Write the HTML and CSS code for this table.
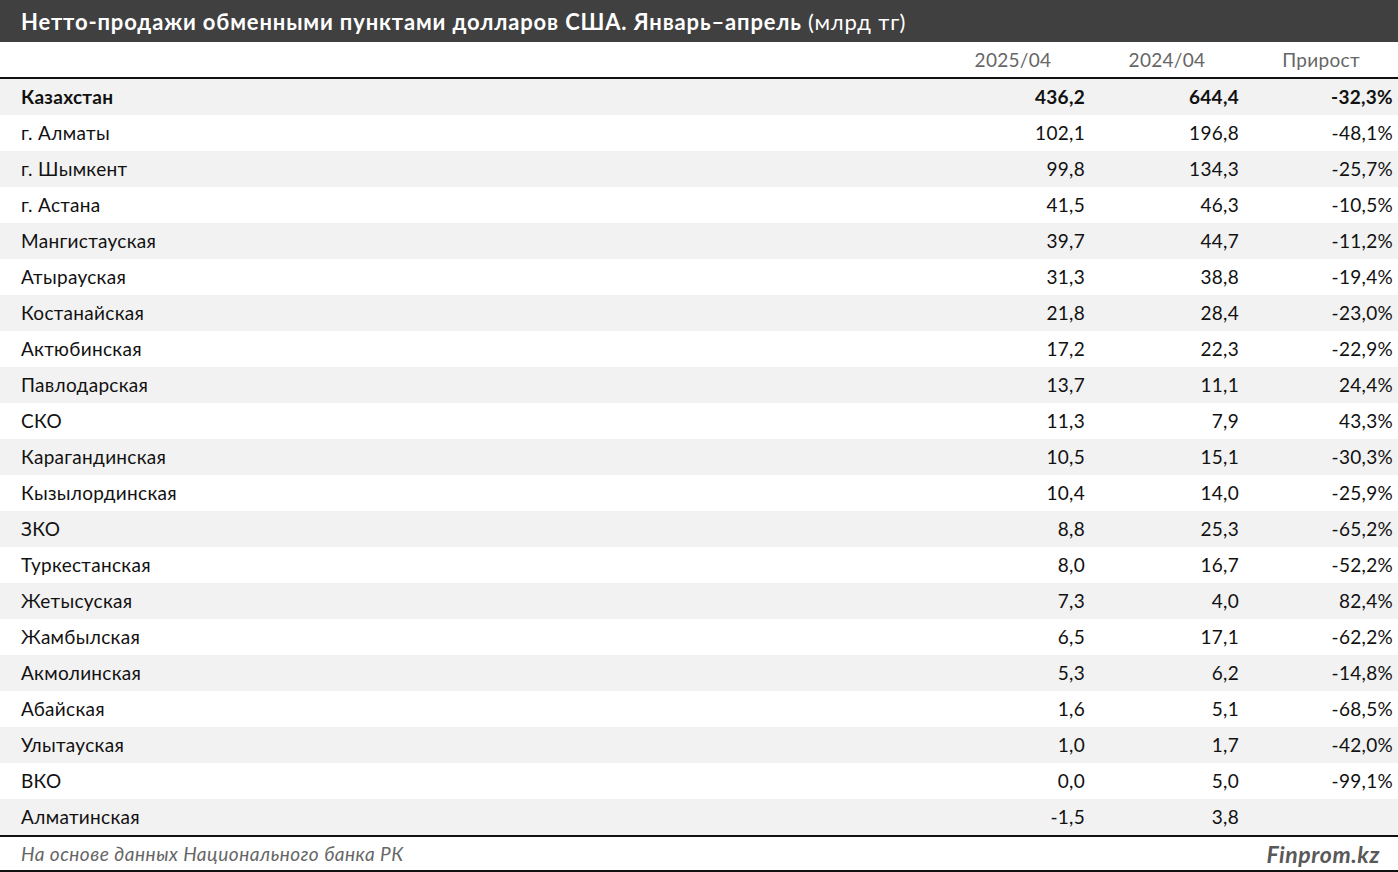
FILE: index.html
```html
<!DOCTYPE html>
<html lang="ru">
<head>
<meta charset="utf-8">
<link rel="stylesheet" href="styles.css">
</head>
<body>
<div class="page">
  <div class="title">Нетто-продажи обменными пунктами долларов США. Январь–апрель <span class="unit">(млрд тг)</span></div>
  <div class="thead">
    <div class="name"></div>
    <div class="col h">2025/04</div>
    <div class="col h">2024/04</div>
    <div class="col h">Прирост</div>
  </div>
  <div class="tbody">
    <div class="row total"><div class="name">Казахстан</div><div class="col">436,2</div><div class="col">644,4</div><div class="col">-32,3%</div></div>
    <div class="row"><div class="name">г. Алматы</div><div class="col">102,1</div><div class="col">196,8</div><div class="col">-48,1%</div></div>
    <div class="row"><div class="name">г. Шымкент</div><div class="col">99,8</div><div class="col">134,3</div><div class="col">-25,7%</div></div>
    <div class="row"><div class="name">г. Астана</div><div class="col">41,5</div><div class="col">46,3</div><div class="col">-10,5%</div></div>
    <div class="row"><div class="name">Мангистауская</div><div class="col">39,7</div><div class="col">44,7</div><div class="col">-11,2%</div></div>
    <div class="row"><div class="name">Атырауская</div><div class="col">31,3</div><div class="col">38,8</div><div class="col">-19,4%</div></div>
    <div class="row"><div class="name">Костанайская</div><div class="col">21,8</div><div class="col">28,4</div><div class="col">-23,0%</div></div>
    <div class="row"><div class="name">Актюбинская</div><div class="col">17,2</div><div class="col">22,3</div><div class="col">-22,9%</div></div>
    <div class="row"><div class="name">Павлодарская</div><div class="col">13,7</div><div class="col">11,1</div><div class="col">24,4%</div></div>
    <div class="row"><div class="name">СКО</div><div class="col">11,3</div><div class="col">7,9</div><div class="col">43,3%</div></div>
    <div class="row"><div class="name">Карагандинская</div><div class="col">10,5</div><div class="col">15,1</div><div class="col">-30,3%</div></div>
    <div class="row"><div class="name">Кызылординская</div><div class="col">10,4</div><div class="col">14,0</div><div class="col">-25,9%</div></div>
    <div class="row"><div class="name">ЗКО</div><div class="col">8,8</div><div class="col">25,3</div><div class="col">-65,2%</div></div>
    <div class="row"><div class="name">Туркестанская</div><div class="col">8,0</div><div class="col">16,7</div><div class="col">-52,2%</div></div>
    <div class="row"><div class="name">Жетысуская</div><div class="col">7,3</div><div class="col">4,0</div><div class="col">82,4%</div></div>
    <div class="row"><div class="name">Жамбылская</div><div class="col">6,5</div><div class="col">17,1</div><div class="col">-62,2%</div></div>
    <div class="row"><div class="name">Акмолинская</div><div class="col">5,3</div><div class="col">6,2</div><div class="col">-14,8%</div></div>
    <div class="row"><div class="name">Абайская</div><div class="col">1,6</div><div class="col">5,1</div><div class="col">-68,5%</div></div>
    <div class="row"><div class="name">Улытауская</div><div class="col">1,0</div><div class="col">1,7</div><div class="col">-42,0%</div></div>
    <div class="row"><div class="name">ВКО</div><div class="col">0,0</div><div class="col">5,0</div><div class="col">-99,1%</div></div>
    <div class="row"><div class="name">Алматинская</div><div class="col">-1,5</div><div class="col">3,8</div><div class="col"></div></div>
  </div>
  <div class="foot">
    <div class="source">На основе данных Национального банка РК</div>
    <div class="brand">Finprom.kz</div>
  </div>
</div>
</body>
</html>
```

FILE: styles.css
```css
* { box-sizing: border-box; }
html, body { margin: 0; padding: 0; background: #fff; }
body {
  font-family: "Lato", "Open Sans", "Liberation Sans", sans-serif;
  color: #111;
}
.page { width: 1398px; height: 872px; overflow: hidden; }
.title {
  height: 42px;
  background: #404040;
  color: #fff;
  font-weight: 700;
  font-size: 22px;
  letter-spacing: 0.85px;
  padding-left: 21px;
  display: flex;
  align-items: center;
}
.title .unit { font-weight: 400; margin-left: 6px; }
.thead {
  display: flex;
  height: 37px;
  border-bottom: 2px solid #111;
  align-items: center;
  font-size: 19px;
  letter-spacing: 0.3px;
}
.thead .h {
  color: #666;
  text-align: center;
  padding-left: 10px;
}
.name { flex: 1; padding-left: 21px; }
.col { width: 154px; text-align: right; }
.thead .col:last-child, .row .col:last-child { width: 154px; margin-right: 5px; }
.row {
  display: flex;
  align-items: center;
  height: 36px;
  padding-bottom: 2px;
  font-size: 19px;
  letter-spacing: 0.3px;
}
.row:nth-child(odd) { background: #f2f2f2; }
.row.total { font-weight: 700; }
.foot {
  border-top: 2px solid #111;
  border-bottom: 2px solid #111;
  height: 37px;
  display: flex;
  align-items: center;
  justify-content: space-between;
  padding: 0 18px 0 21px;
  color: #666;
  font-style: italic;
}
.source { font-size: 19px; letter-spacing: 0.5px; }
.brand { font-size: 23px; font-weight: 700; color: #595959; letter-spacing: 0.6px; }
```
